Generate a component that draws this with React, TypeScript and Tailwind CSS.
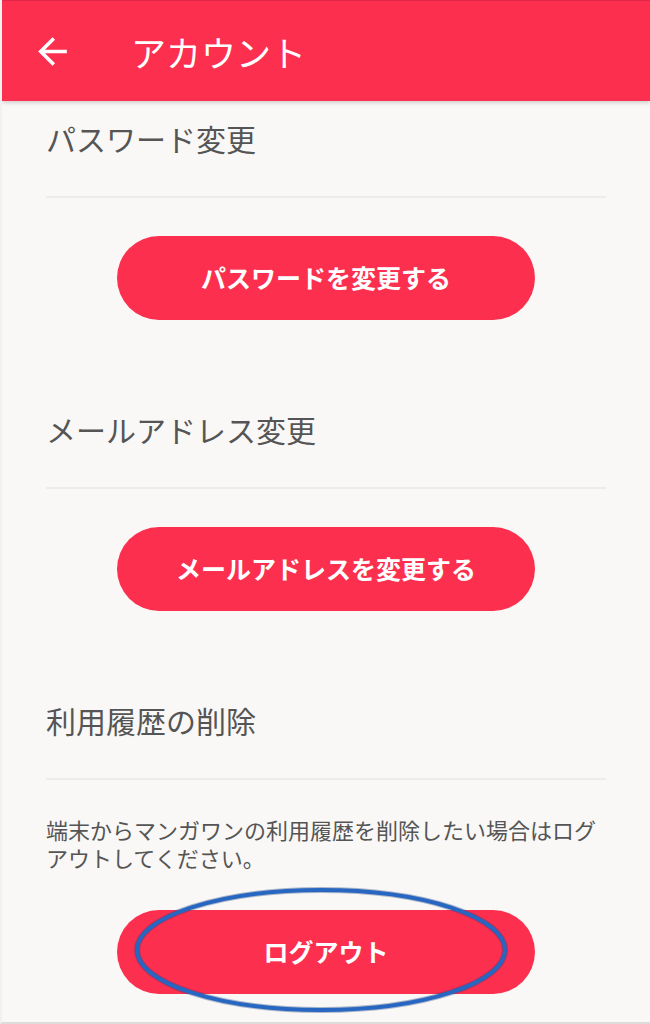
import React from "react";

const font = { fontFamily: '"Noto Sans CJK JP", "Noto Sans", sans-serif' };

function Heading({ children }: { children: React.ReactNode }) {
  return (
    <div className="text-[30px] leading-[40px] text-[#555555]">{children}</div>
  );
}

function Divider() {
  return <div className="mt-[38px] h-[2px] w-full bg-[#eeece9]" />;
}

function PillButton({ children, className = "" }: { children: React.ReactNode; className?: string }) {
  return (
    <button
      className={
        "mx-auto flex h-[84px] w-[418px] items-center justify-center rounded-full bg-[#fc2f4f] text-[25px] font-bold text-white " +
        className
      }
    >
      {children}
    </button>
  );
}

export default function App() {
  return (
    <div
      className="box-border flex h-[1024px] w-full flex-col overflow-hidden border-b-2 border-l-2 border-b-[#dcdcdc] border-l-[#f1f1f1] bg-[#f9f8f6]"
      style={font}
    >
      <header className="relative z-10 flex h-[101px] shrink-0 items-center border-t border-[#e2284a] bg-[#fc2f4f] pl-[29px] shadow-[0_2px_4px_rgba(0,0,0,0.16)]">
        <svg width="43" height="43" viewBox="0 0 24 24" className="shrink-0">
          <path
            fill="#ffffff"
            d="M20 11H7.83l5.59-5.59L12 4l-8 8 8 8 1.41-1.41L7.83 13H20v-2z"
          />
        </svg>
        <h1 className="ml-[57px] text-[35px] font-normal leading-none text-white">アカウント</h1>
      </header>

      <main className="ml-[44px] w-[560px]">
        <div className="pt-[17px]">
          <Heading>パスワード変更</Heading>
          <Divider />
          <PillButton className="mt-[38px]">パスワードを変更する</PillButton>
        </div>

        <div className="mt-[89px]">
          <Heading>メールアドレス変更</Heading>
          <Divider />
          <PillButton className="mt-[38px]">メールアドレスを変更する</PillButton>
        </div>

        <div className="mt-[89px]">
          <Heading>利用履歴の削除</Heading>
          <Divider />
          <p className="mt-[35px] text-[22px] leading-[28px] text-[#555555]">
            端末からマンガワンの利用履歴を削除したい場合はログ
            <br />
            アウトしてください。
          </p>
          <div className="relative mx-auto mt-[39px] w-[418px]">
            <PillButton>ログアウト</PillButton>
            <svg
              className="pointer-events-none absolute left-[16px] top-[-25px] overflow-visible"
              width="376"
              height="130"
              viewBox="0 0 376 130"
            >
              <ellipse cx="188" cy="65" rx="184" ry="60" fill="none" stroke="#1f3f7a" strokeOpacity="0.35" strokeWidth="6" />
              <ellipse cx="188" cy="65" rx="184" ry="60" fill="none" stroke="#2766c1" strokeWidth="4" />
            </svg>
          </div>
        </div>
      </main>
    </div>
  );
}
